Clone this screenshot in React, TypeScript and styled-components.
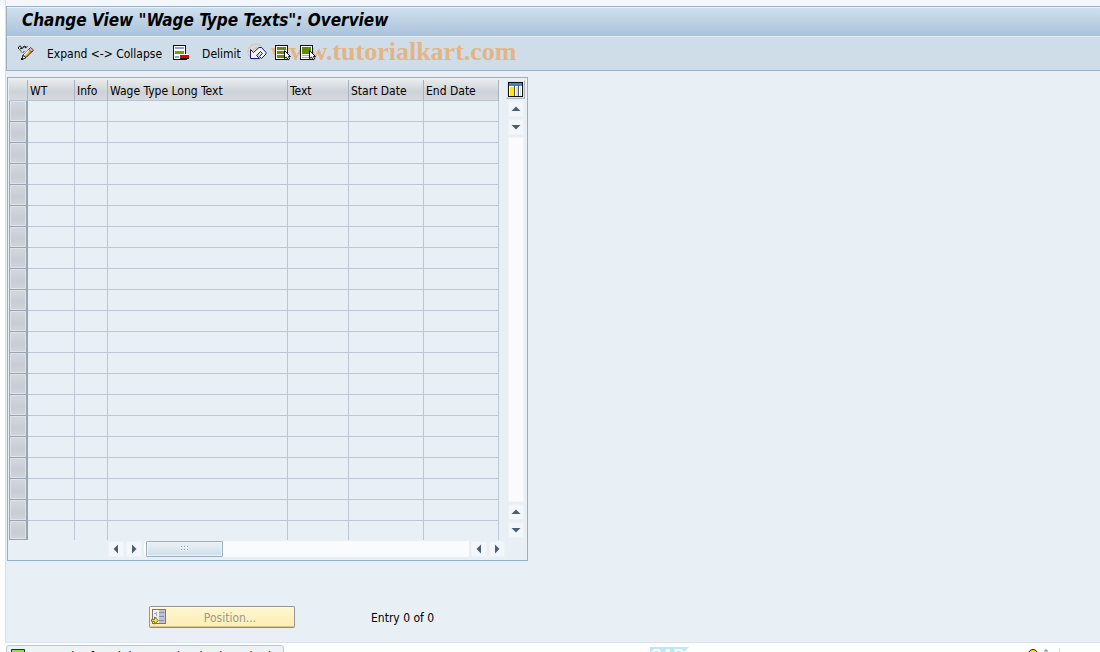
import React from "react";
import styled, { createGlobalStyle } from "styled-components";

const Global = createGlobalStyle`
  * { box-sizing: border-box; }
  html, body, #root { height: 100%; }
  body {
    margin: 0;
    background: #fdfeff;
    color: #000;
    font: 12px/16px "DejaVu Sans Condensed", Tahoma, "DejaVu Sans", sans-serif;
    overflow: hidden;
  }
  button { font: inherit; color: inherit; padding: 0; }
`;

const Screen = styled.div`
  height: 100vh;
  overflow: hidden;
  padding-left: 5px;
  background: linear-gradient(#f0f5fb, #fdfeff 12px);
`;

const Session = styled.main`
  padding: 6px 0 14px;
  border-left: 1px solid #d5dfe9;
  border-bottom: 1px solid #dde3ec;
  background: linear-gradient(#f3f7fc 6px, #e8f0f6 6px);
`;

const Header = styled.header`
  border: 1px solid #9db2c8;
  border-right: 0;
`;

const Title = styled.h1`
  margin: 0;
  height: 30px;
  padding: 0 15px;
  border-top: 1px solid #e6eff6;
  border-bottom: 1px solid #e4eef6;
  background: linear-gradient(#cfdfec, #a9c2db);
  font: italic bold 17px/25px "DejaVu Sans Condensed", Tahoma, sans-serif;
`;

const Toolbar = styled.div`
  position: relative;
  isolation: isolate;
  display: flex;
  align-items: center;
  height: 33px;
  padding-left: 10px;
  background: #cfdde8;
`;

const Tool = styled.button<{ $gap: number }>`
  display: flex;
  align-items: center;
  height: 24px;
  margin-right: ${(p) => p.$gap}px;
  border: 0;
  background: none;
  white-space: nowrap;
  svg { display: block; margin-bottom: 2px; }
`;

const Watermark = styled.div`
  position: absolute;
  z-index: -1;
  left: 240px;
  top: 0;
  display: flex;
  align-items: center;
  gap: 2px;
  height: 30px;
  color: #f0a050;
  opacity: 0.65;
  pointer-events: none;
  font: bold 26px/30px "Liberation Serif", serif;
`;

const Panel = styled.section`
  display: grid;
  grid-template-columns: 490px 1fr;
  align-content: start;
  align-items: start;
  width: 521px;
  height: 484px;
  margin: 6px 0 0 1px;
  padding: 2px 2px 0 1px;
  border: 1px solid #8fb1cc;
`;

const Grid = styled.table`
  width: 490px;
  border-collapse: separate;
  border-spacing: 0;
  table-layout: fixed;
`;

const Head = styled.th<{ $w: number }>`
  width: ${(p) => p.$w}px;
  height: 21px;
  padding: 2px 2px 0;
  border-right: 1px solid #a9b2be;
  border-bottom: 1px solid #b9c3d1;
  background: linear-gradient(#e8eaec, #cdd2d8 60%, #d6dadf);
  font-weight: normal;
  text-align: left;
  white-space: nowrap;
`;

const Cell = styled.td`
  height: 21px;
  padding: 0;
  border-right: 1px solid #bcc6d5;
  border-bottom: 1px solid #bcc6d5;
  tr:last-child > & { height: 19px; border-bottom: 0; }
`;

const Selector = styled.td`
  height: 21px;
  padding: 0;
  border: 1px solid #9aa3b1;
  border-top: 0;
  border-right-width: 2px;
  background: linear-gradient(#d3d7dd, #c8cdd5 60%, #cfd4da);
  box-shadow: inset 0 0 0 1px #dfe3e8;
  tr:last-child > & { height: 19px; }
`;

const Side = styled.div`
  display: flex;
  flex-direction: column;
  align-items: center;
  gap: 2px;
  height: 458px;
  padding-left: 7px;
`;

const Config = styled.button`
  display: block;
  width: 19px;
  height: 19px;
  padding: 0 1px;
  border: 1px solid #aeb6c0;
  border-top-color: #e9edf1;
  border-left-color: #e9edf1;
  background: #dde2e7;
  svg { display: block; }
`;

const Arrow = styled.button`
  display: grid;
  place-items: center;
  flex: none;
  width: 16px;
  height: 16px;
  border: 1px solid #eef2f7;
  background: #f3f6fa;
  svg { display: block; }
`;

const Track = styled.div`
  flex: 1;
  width: 16px;
  border: 1px solid #f2f4f7;
  background: #fafbfc;
`;

const Bottom = styled.div`
  display: flex;
  gap: 2px;
  height: 16px;
  margin: 1px 0 0 99px;
  width: 397px;
`;

const Rail = styled.div`
  flex: 1;
  padding-left: 2px;
  background: #fafbfc;
`;

const Thumb = styled.div`
  display: grid;
  place-items: center;
  width: 77px;
  height: 16px;
  border: 1px solid #9bafbd;
  border-radius: 1px;
  background: linear-gradient(#e9f1f7, #d0dfe9);
  box-shadow: inset 0 0 0 1px #eaf2f7;
`;

const Footer = styled.div`
  display: flex;
  align-items: center;
  gap: 76px;
  margin: 45px 0 0 143px;
`;

const Entry = styled.div`
  padding-top: 2px;
`;

const Position = styled.button`
  display: flex;
  align-items: center;
  width: 146px;
  height: 22px;
  padding: 0 1px;
  border: 1px solid #969696;
  border-bottom-color: #8d8d80;
  border-radius: 2px;
  background: linear-gradient(#fff6d2, #fdeeb4);
  box-shadow: inset 0 -1px #dcc98a, inset 0 1px #fffbe8;
  color: #9b988e;
  span { flex: 1; padding: 2px 12px 0 12px; text-align: center; }
`;

const Status = styled.footer`
  display: flex;
  align-items: flex-start;
  justify-content: space-between;
  margin-top: 2px;
  padding-left: 1px;
`;

const Message = styled.div`
  display: flex;
  gap: 6px;
  width: 278px;
  height: 24px;
  padding: 3px 4px;
  border: 1px solid #b9c8d8;
  border-radius: 3px;
  background: #edf2f6;
  white-space: nowrap;
`;

const Brand = styled.svg`
  display: block;
  margin: 2px 0 0 28px;
`;

const Hints = styled.svg`
  display: block;
  margin-top: 2px;
`;

const columns: [string, number][] = [
  ["WT", 47],
  ["Info", 33],
  ["Wage Type Long Text", 180],
  ["Text", 61],
  ["Start Date", 75],
  ["End Date", 75],
];

const turns = { up: 0, right: 90, down: 180, left: 270 };

function ArrowButton({ to }: { to: keyof typeof turns }) {
  return (
    <Arrow aria-label={`Scroll ${to}`}>
      <svg width="10" height="10" viewBox="0 0 10 10">
        <path d="M.5 7L5 2.500L9.500 7Z" fill="#4a6070" transform={`rotate(${turns[to]} 5 5)`} />
      </svg>
    </Arrow>
  );
}

const PencilIcon = () => (
  <svg width="18" height="16" viewBox="0 0 18 16">
    <path d="M1.500 4V2L3 .8L4.500 2L3.500 4L6 3L7 1L8.500 1.500L8 3L10.500 1.500" fill="none" stroke="#111" />
    <path d="M2.500 4.500L5 7.500L8 6.500" fill="none" stroke="#222" strokeDasharray="1.500 1" />
    <path d="M5 14.500L6 10L12.500 3.500L15.500 6L9 12.500Z" fill="#ffab26" stroke="#111" />
    <path d="M11.500 4.500L13.500 2.500L16.500 5L14.500 7Z" fill="#e9b8a8" stroke="#222" strokeWidth=".8" />
    <path d="M7 10L12 5" stroke="#fff" strokeWidth="1.400" />
    <path d="M5 14.500L6 10.500L9 12.500Z" fill="#fff" stroke="#111" strokeWidth=".8" />
    <path d="M4 13H6V15H4Z" fill="#111" />
  </svg>
);

const DelimitIcon = () => (
  <svg width="17" height="16" viewBox="0 0 17 16" shapeRendering="crispEdges">
    <path d="M.5 .5H12.5V14.5H.5Z" fill="#fff" stroke="#111" />
    <path d="M2 2H11V4H2ZM2 11H8V13H2Z" fill="#9d9dc3" />
    <path d="M2 6H11V9H2Z" fill="#719d18" />
    <path d="M6 9H16V13H6Z" fill="#fff" />
    <path d="M7 10H16V13H7Z" fill="#e80000" />
    <path d="M7 13.500H16M.5 14.500H14" stroke="#111" />
  </svg>
);

const UndoIcon = () => (
  <svg width="17" height="14" viewBox="0 0 17 14">
    <path d="M.5 3.500V12.500H9.500L6.500 9.500L10.500 5.500L12.500 7.500L9.500 10.500L11.500 12.500L16 8V6.500L11.500 1.500H9L3.500 6.500Z" fill="#f1f4fa" stroke="#1b1b7c" />
  </svg>
);

const SelectIcon = ({ block }: { block?: boolean }) => (
  <svg width="16" height="16" viewBox="0 0 16 16" shapeRendering="crispEdges">
    <path d="M.5 .5H12.5V14.5H.5Z" fill="#fff" stroke="#111" />
    {block ? (
      <>
        <path d="M2 2H11V9H2Z" fill="#5f8a00" />
        <path d="M2 10.500H9M2 12.500H9" stroke="#9faac5" />
      </>
    ) : (
      <path d="M2 2H11V5H2ZM2 6H11V9H2ZM2 10H11V13H2Z" fill="#688c12" />
    )}
    <path d="M9.500 5.500V13.500L11.500 12L13 15L14.500 14L13.500 11.500H15.500Z" fill="#fff" stroke="#111" shapeRendering="auto" />
  </svg>
);

const ConfigIcon = () => (
  <svg width="15" height="15" viewBox="0 0 15 15" shapeRendering="crispEdges">
    <path d="M.5 .5H14.5V14.5H.5Z" fill="#fff" stroke="#111" />
    <path d="M1 1H14V4H1Z" fill="#3985c7" />
    <path d="M2 5H6V14H2Z" fill="#ffe900" />
    <path d="M8 5H10V14H8ZM12 5H13V14H12Z" fill="#d7dce2" />
    <path d="M6.500 3V14M10.500 3V14" stroke="#555" />
  </svg>
);

const PositionIcon = () => (
  <svg width="16" height="16" viewBox="0 0 16 16" shapeRendering="crispEdges">
    <path d="M1.5 .5H14.5V14.5H1.5Z" fill="#eef0f2" stroke="#777785" />
    <path d="M8 1H14V14H8Z" fill="#bfc1d8" />
    <path d="M8 3.5H13M8 7.5H13M8 11.5H13" stroke="#8b8ca4" />
    <path d="M3 4.5H6M5 2.5V7M3 8.5H6" stroke="#a5a8b5" />
    <path d="M.5 10.5H3.5V8L7.5 11.5L3.5 15V12.5H.5Z" fill="#f9e34b" stroke="#82752f" shapeRendering="auto" />
  </svg>
);

export default function App() {
  return (
    <>
      <Global />
      <Screen>
        <Session>
          <Header>
            <Title>Change View "Wage Type Texts": Overview</Title>
            <Toolbar>
              <Tool $gap={12} aria-label="Display or change"><PencilIcon /></Tool>
              <Tool $gap={11}>Expand &lt;-&gt; Collapse</Tool>
              <Tool $gap={12} aria-label="Delete"><DelimitIcon /></Tool>
              <Tool $gap={9}>Delimit</Tool>
              <Tool $gap={8} aria-label="Undo"><UndoIcon /></Tool>
              <Tool $gap={9} aria-label="Select all"><SelectIcon /></Tool>
              <Tool $gap={0} aria-label="Select block"><SelectIcon block /></Tool>
              <Watermark>
                <svg width="22" height="20" viewBox="0 0 22 20" fill="none" stroke="#f0a050">
                  <circle cx="9" cy="10" r="8" strokeDasharray="3 1" />
                  <path d="M12 7A4 4 0 1 0 12 13" />
                </svg>
                <span>www.tutorialkart.com</span>
              </Watermark>
            </Toolbar>
          </Header>
          <Panel>
            <Grid>
              <thead>
                <tr>
                  <Head $w={19} aria-label="Row selector" />
                  {columns.map(([name, width]) => (
                    <Head key={name} $w={width}>{name}</Head>
                  ))}
                </tr>
              </thead>
              <tbody>
                {Array.from({ length: 21 }, (_, row) => (
                  <tr key={row}>
                    <Selector />
                    {columns.map(([name]) => <Cell key={name} />)}
                  </tr>
                ))}
              </tbody>
            </Grid>
            <Side>
              <Config aria-label="Table settings"><ConfigIcon /></Config>
              <ArrowButton to="up" />
              <ArrowButton to="down" />
              <Track />
              <ArrowButton to="up" />
              <ArrowButton to="down" />
            </Side>
            <Bottom>
              <ArrowButton to="left" />
              <ArrowButton to="right" />
              <Rail>
                <Thumb>
                  <svg width="9" height="6" viewBox="0 0 9 6" shapeRendering="crispEdges">
                    <path d="M0 1.5H9M0 4.5H9" stroke="#fff" strokeDasharray="2 1" />
                    <path d="M1 .5H9M1 3.5H9" stroke="#8fa3b1" strokeDasharray="1 2" />
                  </svg>
                </Thumb>
              </Rail>
              <ArrowButton to="left" />
              <ArrowButton to="right" />
            </Bottom>
          </Panel>
          <Footer>
            <Position disabled><PositionIcon /><span>Position...</span></Position>
            <Entry>Entry 0 of 0</Entry>
          </Footer>
        </Session>
        <Status>
          <Message>
            <svg width="14" height="14" viewBox="0 0 14 14">
              <path d="M.5 2V.5H13.5V13.5H.5Z" fill="#8fdc5a" stroke="#223018" />
            </svg>
            <span>No entries found that match selection criteria</span>
          </Message>
          <Brand width="40" height="20" viewBox="0 0 40 20">
            <path d="M0 0H39L20 19H0Z" fill="#bfe6f7" />
            <text x="1" y="14" fill="#fff" fontFamily="Liberation Sans" fontWeight="bold" fontSize="16">SAP</text>
          </Brand>
          <Hints width="73" height="16" viewBox="0 0 73 16">
            <circle cx="6" cy="7" r="4.5" fill="#ffec00" stroke="#111" />
            <path d="M18 6V3H20V5" fill="none" stroke="#6889aa" />
            <path d="M32.500 1V14" stroke="#d5dbe2" />
          </Hints>
        </Status>
      </Screen>
    </>
  );
}
